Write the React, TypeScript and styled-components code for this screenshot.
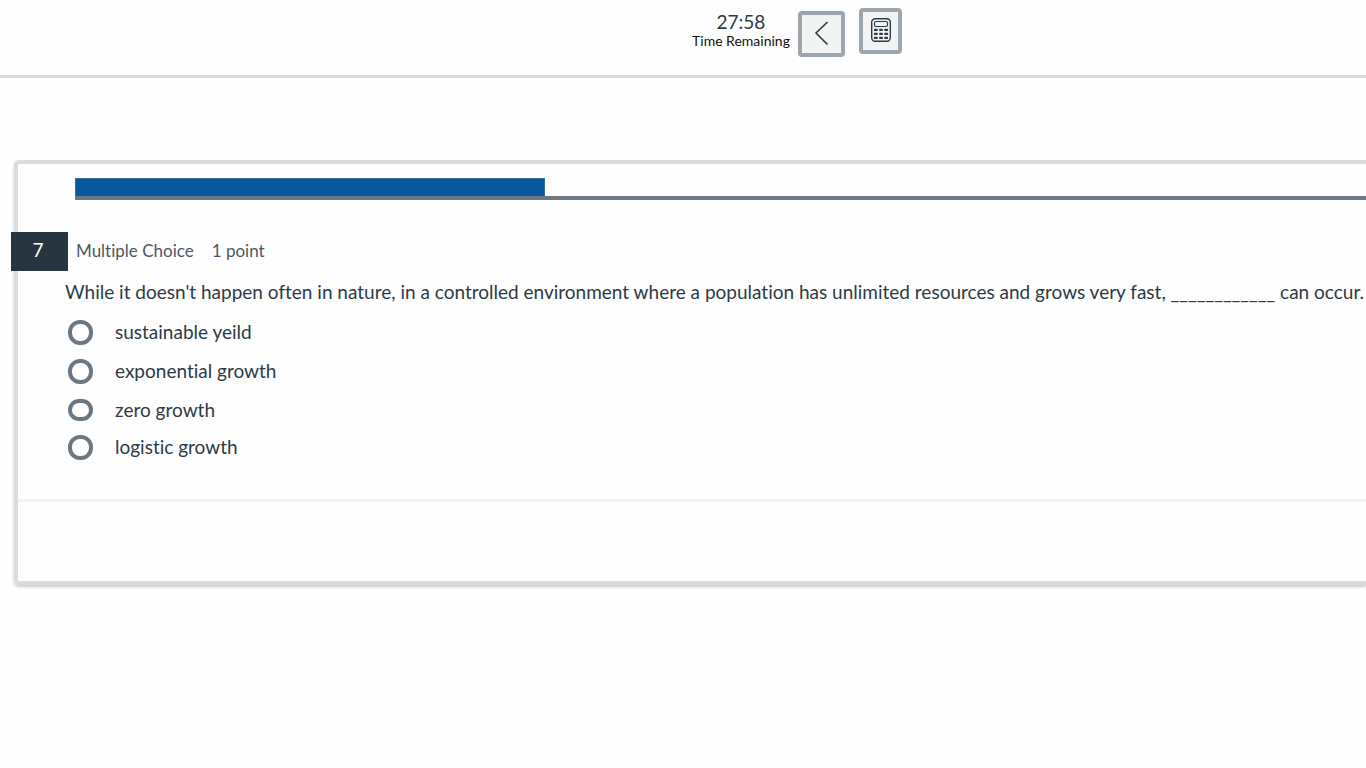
import React from "react";
import styled, { createGlobalStyle } from "styled-components";

const GlobalStyle = createGlobalStyle`
  *, *::before, *::after { box-sizing: border-box; }
  body {
    margin: 0;
    min-height: 100vh;
    background: #fefefe;
    color: #2d3b45;
    font-family: Lato, "Liberation Sans", sans-serif;
    font-variant-ligatures: none;
    text-rendering: optimizeLegibility;
  }
`;

const Header = styled.header`
  display: flex;
  justify-content: center;
  align-items: flex-start;
  height: 78px;
  padding: 8px 0 0 228px;
  border-bottom: 3px solid #d7dadc;
`;

const Timer = styled.div`
  display: flex;
  flex-direction: column;
  align-items: center;
  padding-top: 1px;
  margin-right: 8px;
`;

const TimeValue = styled.span`
  font-size: 19px;
  line-height: 25px;
`;

const TimeLabel = styled.span`
  font-size: 14px;
  line-height: 14px;
  color: #111;
  white-space: nowrap;
`;

const ToolButton = styled.button<{ $width: number; $drop?: number }>`
  display: flex;
  align-items: center;
  justify-content: center;
  width: ${(p) => p.$width}px;
  height: 46px;
  margin: ${(p) => p.$drop ?? 0}px 0 0;
  padding: 0 0 2px 1px;
  border: 4px solid #9ea6ad;
  border-radius: 4px;
  background: #f2f4f4;
  color: #2d3b45;

  & + & { margin-left: 14px; }
`;

const Card = styled.main`
  margin: 82px 0 0 14px;
  border: 4px solid #d9dbdc;
  border-right: 0;
  border-radius: 5px 0 0 5px;
  box-shadow: 0 2px 3px rgba(0, 0, 0, 0.2);
`;

const Progress = styled.div`
  height: 22px;
  margin: 14px 0 0 57px;
  border-bottom: 4px solid #6b7785;
`;

const ProgressFill = styled.div`
  height: 18px;
  background: #08599c;
  border: 1px solid #35719f;
  border-bottom: 0;
`;

const QuestionHeader = styled.div`
  display: flex;
  align-items: center;
  margin: 32px 0 0 -7px;
  color: #4a5963;
  font-size: 17px;
  line-height: 24px;
`;

const QuestionNumber = styled.span`
  width: 57px;
  margin-right: 8px;
  padding: 0 3px 3px 0;
  background: #273540;
  color: #fff;
  font-size: 19px;
  line-height: 36px;
  text-align: center;
`;

const Detail = styled.span`
  margin-right: 18px;
  padding-bottom: 2px;
`;

const Question = styled.fieldset`
  min-width: 0;
  margin: 0;
  padding: 0 0 34px 47px;
  border: 0;
  font-size: 19px;
  line-height: 24px;
`;

const Prompt = styled.legend`
  padding: 9px 0;
  white-space: nowrap;
`;

const Choice = styled.label<{ $height: number }>`
  display: flex;
  align-items: center;
  width: fit-content;
  height: ${(p) => p.$height}px;
  padding-left: 3px;
`;

const ChoiceText = styled.span`
  padding-bottom: 1px;
`;

const Radio = styled.input<{ $height: number }>`
  appearance: none;
  width: 25px;
  height: ${(p) => p.$height}px;
  margin: 0 22px 0 0;
  border: 4px solid #6b7883;
  border-radius: 12px;
  background: #fff;

  &:checked { background: #08599c; }
`;

const CardFooter = styled.footer`
  height: 82px;
  border-top: 3px solid #f2f3f3;
`;

const choices = [
  { text: "sustainable yeild", row: 39, radio: 25 },
  { text: "exponential growth", row: 39, radio: 25 },
  { text: "zero growth", row: 38, radio: 22 },
  { text: "logistic growth", row: 36, radio: 25 },
];

const progress = 470 / 1291;

function BackIcon() {
  return (
    <svg width="16" height="26" viewBox="0 0 16 26" fill="none" stroke="currentColor" strokeWidth="1.6" aria-hidden="true">
      <path d="M13.5 2 2 13l11.500 11.500" />
    </svg>
  );
}

function CalculatorIcon() {
  return (
    <svg width="20" height="24" viewBox="0 0 20 24" fill="none" stroke="currentColor" aria-hidden="true">
      <rect x="0.700" y="0.700" width="18.600" height="22.600" rx="3.500" strokeWidth="1.400" />
      <rect x="3.500" y="3.500" width="13" height="5" rx="1.500" strokeWidth="1.200" />
      {[10.7, 14.7, 18.7].map((y) =>
        [3, 8.2, 13.4].map((x) => (
          <rect key={`${x}-${y}`} x={x} y={y} width="3.600" height="2.300" rx="0.600" fill="currentColor" stroke="none" />
        ))
      )}
    </svg>
  );
}

export default function App() {
  return (
    <>
      <GlobalStyle />
      <Header>
        <Timer>
          <TimeValue>27:58</TimeValue>
          <TimeLabel>Time Remaining</TimeLabel>
        </Timer>
        <ToolButton $width={47} $drop={3} type="button" aria-label="Back">
          <BackIcon />
        </ToolButton>
        <ToolButton $width={43} type="button" aria-label="Calculator">
          <CalculatorIcon />
        </ToolButton>
      </Header>
      <Card>
        <Progress>
          <ProgressFill style={{ width: `${progress * 100}%` }} />
        </Progress>
        <QuestionHeader>
          <QuestionNumber>7</QuestionNumber>
          <Detail>Multiple Choice</Detail>
          <Detail>1 point</Detail>
        </QuestionHeader>
        <Question>
          <Prompt>
            While it doesn't happen often in nature, in a controlled environment where a population has unlimited
            resources and grows very fast, ____________ can occur.
          </Prompt>
          {choices.map((c) => (
            <Choice key={c.text} $height={c.row}>
              <Radio type="radio" name="answer" $height={c.radio} />
              <ChoiceText>{c.text}</ChoiceText>
            </Choice>
          ))}
        </Question>
        <CardFooter />
      </Card>
    </>
  );
}
